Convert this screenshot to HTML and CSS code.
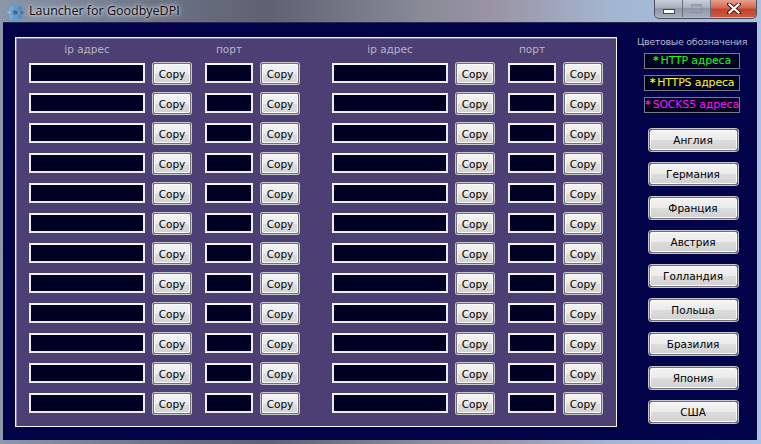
FILE: index.html
```html
<!DOCTYPE html>
<html>
<head>
<meta charset="utf-8">
<link rel="stylesheet" href="styles.css">
</head>
<body>
<div class="window">
  <div class="titlebar">
    <svg class="appicon" width="17" height="17" viewBox="0 0 16 16">
      <circle cx="8" cy="2.2" r="1.9" fill="#4aa3e8"/>
      <circle cx="12.1" cy="3.9" r="1.9" fill="#3a8fd8"/>
      <circle cx="13.8" cy="8" r="1.9" fill="#2f7fcc"/>
      <circle cx="12.1" cy="12.1" r="1.9" fill="#3a8fd8"/>
      <circle cx="8" cy="13.8" r="1.9" fill="#4aa3e8"/>
      <circle cx="3.9" cy="12.1" r="1.9" fill="#5ab4f0"/>
      <circle cx="2.2" cy="8" r="1.9" fill="#6bc0f4"/>
      <circle cx="3.9" cy="3.9" r="1.9" fill="#5ab4f0"/>
      <circle cx="8" cy="8" r="2.2" fill="#1f6fc0"/>
    </svg>
    <span class="title">Launcher for GoodbyeDPI</span>
    <div class="controls">
      <div class="cbtn min"><span class="minbar"></span></div>
      <div class="cbtn max"><span class="maxbox"></span></div>
      <div class="cbtn close"><svg width="14" height="11" viewBox="0 0 14 11"><path d="M2 1 L12 10 M12 1 L2 10" stroke="#3a2020" stroke-width="4" stroke-linecap="square"/><path d="M2.5 1.5 L11.5 9.5 M11.5 1.5 L2.5 9.5" stroke="#fff" stroke-width="2.2" stroke-linecap="square"/></svg></div>
    </div>
  </div>
  <div class="client">
    <div class="panel">
      <div class="group">
        <div class="hdr ip">ip адрес</div><div></div><div class="hdr port">порт</div><div></div>
        <div class="box ip"></div><div class="copy">Copy</div><div class="box port"></div><div class="copy">Copy</div>
        <div class="box ip"></div><div class="copy">Copy</div><div class="box port"></div><div class="copy">Copy</div>
        <div class="box ip"></div><div class="copy">Copy</div><div class="box port"></div><div class="copy">Copy</div>
        <div class="box ip"></div><div class="copy">Copy</div><div class="box port"></div><div class="copy">Copy</div>
        <div class="box ip"></div><div class="copy">Copy</div><div class="box port"></div><div class="copy">Copy</div>
        <div class="box ip"></div><div class="copy">Copy</div><div class="box port"></div><div class="copy">Copy</div>
        <div class="box ip"></div><div class="copy">Copy</div><div class="box port"></div><div class="copy">Copy</div>
        <div class="box ip"></div><div class="copy">Copy</div><div class="box port"></div><div class="copy">Copy</div>
        <div class="box ip"></div><div class="copy">Copy</div><div class="box port"></div><div class="copy">Copy</div>
        <div class="box ip"></div><div class="copy">Copy</div><div class="box port"></div><div class="copy">Copy</div>
        <div class="box ip"></div><div class="copy">Copy</div><div class="box port"></div><div class="copy">Copy</div>
        <div class="box ip"></div><div class="copy">Copy</div><div class="box port"></div><div class="copy">Copy</div>
      </div>
      <div class="group">
        <div class="hdr ip">ip адрес</div><div></div><div class="hdr port">порт</div><div></div>
        <div class="box ip"></div><div class="copy">Copy</div><div class="box port"></div><div class="copy">Copy</div>
        <div class="box ip"></div><div class="copy">Copy</div><div class="box port"></div><div class="copy">Copy</div>
        <div class="box ip"></div><div class="copy">Copy</div><div class="box port"></div><div class="copy">Copy</div>
        <div class="box ip"></div><div class="copy">Copy</div><div class="box port"></div><div class="copy">Copy</div>
        <div class="box ip"></div><div class="copy">Copy</div><div class="box port"></div><div class="copy">Copy</div>
        <div class="box ip"></div><div class="copy">Copy</div><div class="box port"></div><div class="copy">Copy</div>
        <div class="box ip"></div><div class="copy">Copy</div><div class="box port"></div><div class="copy">Copy</div>
        <div class="box ip"></div><div class="copy">Copy</div><div class="box port"></div><div class="copy">Copy</div>
        <div class="box ip"></div><div class="copy">Copy</div><div class="box port"></div><div class="copy">Copy</div>
        <div class="box ip"></div><div class="copy">Copy</div><div class="box port"></div><div class="copy">Copy</div>
        <div class="box ip"></div><div class="copy">Copy</div><div class="box port"></div><div class="copy">Copy</div>
        <div class="box ip"></div><div class="copy">Copy</div><div class="box port"></div><div class="copy">Copy</div>
      </div>
    </div>
    <div class="side">
      <div class="legend-title">Цветовые обозначения</div>
      <div class="legend http"><b>*</b>HTTP адреса</div>
      <div class="legend https"><b>*</b>HTTPS адреса</div>
      <div class="legend socks"><b>*</b>SOCKS5 адреса</div>
      <div class="countries">
        <div class="country">Англия</div>
        <div class="country">Германия</div>
        <div class="country">Франция</div>
        <div class="country">Австрия</div>
        <div class="country">Голландия</div>
        <div class="country">Польша</div>
        <div class="country">Бразилия</div>
        <div class="country">Япония</div>
        <div class="country">США</div>
      </div>
    </div>
  </div>
</div>
</body>
</html>
```
FILE: styles.css
```css
html, body {
  margin: 0;
  padding: 0;
}
body {
  width: 761px;
  height: 444px;
  overflow: hidden;
  font-family: "DejaVu Sans", "Liberation Sans", sans-serif;
}
.window {
  width: 761px;
  height: 444px;
  display: flex;
  flex-direction: column;
  background: linear-gradient(90deg, #8a97aa 0%, #6d7486 20%, #5e6172 35%, #878a96 55%, #9a94a4 65%, #a3b6d0 80%, #a9c2e2 100%);
  box-sizing: border-box;
  padding: 0 4px 4px 3px;
}
.titlebar {
  height: 22px;
  display: flex;
  align-items: flex-start;
}
.appicon {
  margin: 4px 0 0 4px;
}
.title {
  margin: 3px 0 0 5px;
  font-family: "Open Sans", "DejaVu Sans", sans-serif;
  font-size: 12.5px;
  line-height: 16px;
  color: #0a0a12;
  text-shadow: 0 0 6px rgba(255,255,255,0.9), 0 0 3px rgba(255,255,255,0.9);
}
.controls {
  margin-left: auto;
  display: flex;
  height: 18px;
  border: 1px solid #4a5060;
  border-top: none;
  border-radius: 0 0 5px 5px;
  overflow: hidden;
}
.cbtn {
  display: flex;
  align-items: center;
  justify-content: center;
  height: 17px;
}
.min, .max {
  width: 27px;
  background: linear-gradient(180deg, #c9d0da 0%, #a7b0be 45%, #8f98a8 50%, #a4adbb 100%);
  border-right: 1px solid #6a7080;
}
.minbar {
  width: 10px;
  height: 3px;
  background: #fff;
  border: 1px solid #404858;
  margin-top: 5px;
}
.maxbox {
  width: 9px;
  height: 7px;
  border: 1px solid #8890a0;
  box-shadow: inset 0 2px 0 #9aa2b0;
  opacity: 0.8;
}
.close {
  width: 45px;
  background: linear-gradient(180deg, #e6a090 0%, #d46a52 45%, #c0432a 55%, #cc5a40 100%);
}
.client {
  flex: 1;
  background: #03034a;
  display: flex;
  align-items: flex-start;
  border-top: 1px solid #2a2a50;
}
.panel {
  margin: 14px 0 0 12px;
  width: 602px;
  height: 390px;
  box-sizing: border-box;
  background: #4b3f73;
  border: 1px solid #f4f4f4;
  box-shadow: inset 1px 1px 0 #8a84a8;
  display: flex;
  padding: 6px 0 0 13px;
  gap: 33px;
}
.group {
  display: grid;
  grid-template-columns: 124px 52px 56px 38px;
  grid-template-rows: 10px;
  grid-auto-rows: 21px;
  row-gap: 9px;
}
.ip { width: 116px; }
.port { width: 48px; }
.hdr {
  font-size: 10.5px;
  line-height: 10px;
  color: #b8b4c8;
  text-align: center;
  white-space: nowrap;
}
.box {
  height: 20px;
  box-sizing: border-box;
  background: #000024;
  border: 2px solid #ececec;
  border-top-color: #f6f6f6;
}
.copy {
  width: 38px;
  height: 21px;
  box-sizing: border-box;
  border: 1px solid #707070;
  border-radius: 2px;
  background: linear-gradient(180deg, #f4f4f4 0%, #ebebeb 50%, #dddddd 51%, #d2d2d2 100%);
  box-shadow: inset 0 0 0 1px #fbfbfb, 0 0 0 1px #c8c8d0;
  font-size: 10.5px;
  color: #000;
  display: flex;
  align-items: center;
  justify-content: center;
}
.side {
  margin-left: 27px;
  width: 96px;
  display: flex;
  flex-direction: column;
  align-items: center;
  padding-top: 13px;
}
.legend-title {
  font-size: 9.5px;
  line-height: 12px;
  color: #b8b4c8;
  white-space: nowrap;
  letter-spacing: -0.3px;
}
.legend {
  margin-top: 6px;
  width: 96px;
  height: 16px;
  box-sizing: border-box;
  background: #000020;
  border: 1px solid #7a7a82;
  font-size: 11px;
  line-height: 14px;
  text-align: center;
  white-space: nowrap;
  letter-spacing: -0.2px;
}
.legend b {
  margin-right: 2px;
}
.legend.http { margin-top: 5px; color: #18f818; }
.legend.https { color: #f8f818; }
.legend.socks { color: #f818f8; }
.countries {
  margin-top: 16px;
  display: flex;
  flex-direction: column;
  gap: 12px;
  width: 89px;
  margin-left: 2px;
}
.country {
  height: 22px;
  box-sizing: border-box;
  border: 1px solid #707070;
  border-radius: 3px;
  background: linear-gradient(180deg, #f4f4f4 0%, #ebebeb 50%, #dddddd 51%, #d0d0d0 100%);
  box-shadow: inset 0 0 0 1px #fbfbfb, 0 0 0 1px #c8c8d0;
  font-size: 10.5px;
  color: #000;
  display: flex;
  align-items: center;
  justify-content: center;
}
```
